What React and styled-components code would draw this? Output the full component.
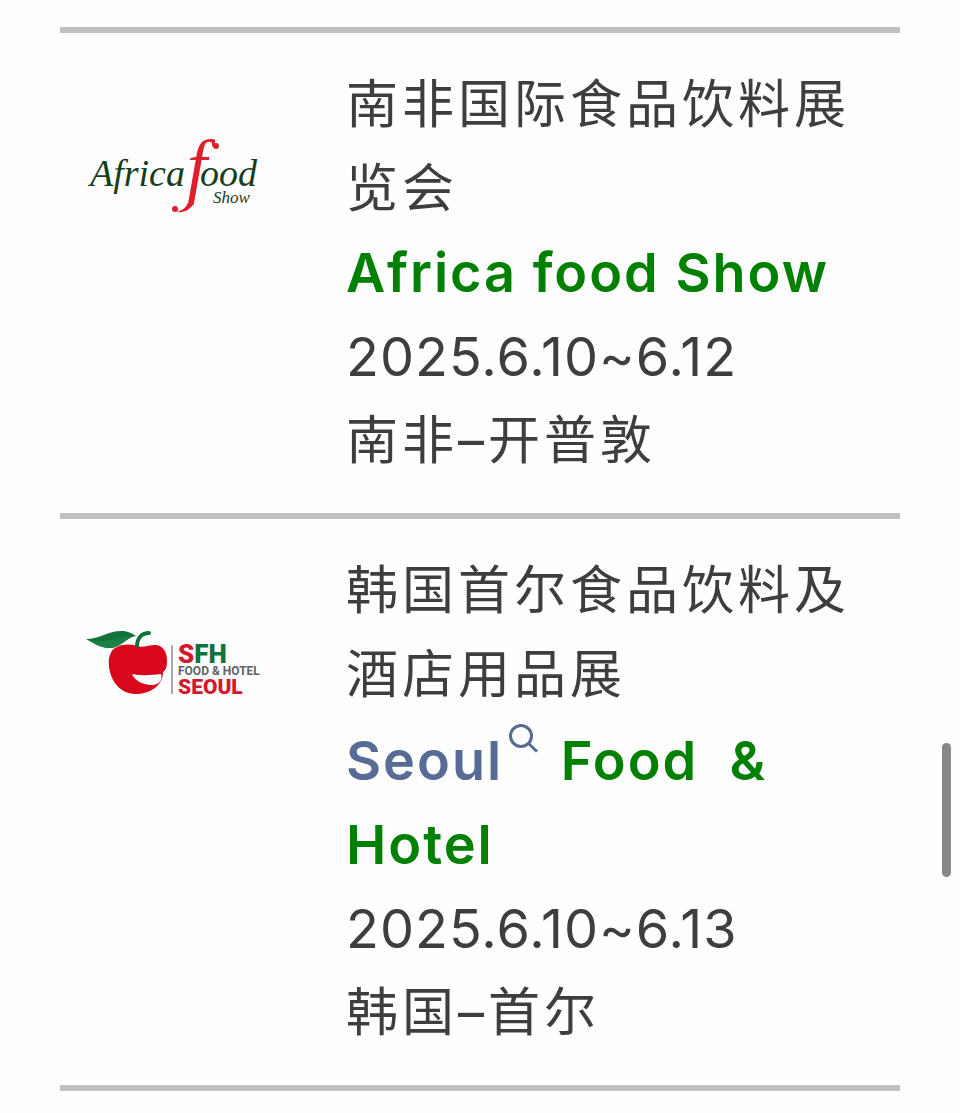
import React from "react";
import styled, { createGlobalStyle } from "styled-components";

const GlobalStyle = createGlobalStyle`
  * { box-sizing: border-box; }
  body {
    margin: 0;
    background: #fefefe;
    color: #3e3e3e;
    font-family: Inter, "Noto Sans CJK SC", sans-serif;
  }
`;

const Page = styled.main`
  padding: 27px 60px 22px;
`;

const ShowTable = styled.table`
  width: 100%;
  border-collapse: separate;
  border-spacing: 0;
  table-layout: fixed;
  border-top: 6px solid #c0c0c0;
`;

const LogoCell = styled.td`
  width: 226px;
  padding: 60px 0 0;
  vertical-align: top;
  text-align: center;
  border-bottom: 6px solid #c0c0c0;
`;

const DetailCell = styled.td`
  padding: 30px 0 30px 60px;
  vertical-align: top;
  border-bottom: 6px solid #c0c0c0;
`;

const Line = styled.p`
  margin: 0;
  font-size: 52px;
  line-height: 84px;
  letter-spacing: 4px;
  padding-right: 20px;
`;

const DateLine = styled(Line)`
  font-size: 54px;
  letter-spacing: 1px;
`;

const EnglishName = styled.strong`
  display: block;
  font-size: 54px;
  font-weight: 600;
  line-height: 84px;
  letter-spacing: 2px;
  color: #008000;
`;

const SearchLink = styled.a`
  color: #576b95;
  text-decoration: none;
`;

const SearchGlyph = styled.svg`
  width: 30px;
  height: 30px;
  margin: 7px 6px 0;
  vertical-align: 26px;
`;

const Logo = styled.svg`
  display: block;
  width: 180px;
  height: 168px;
  margin: 0 auto;
  overflow: visible;
`;

const ScrollThumb = styled.div`
  position: fixed;
  top: 743px;
  right: 9px;
  width: 9px;
  height: 134px;
  border-radius: 5px;
  background: #888888;
`;

function AfricaFoodLogo() {
  return (
    <Logo viewBox="83 93 180 168" role="img" aria-label="Africa food Show">
      <g fontFamily="'Liberation Serif', serif" fontStyle="italic" fill="#173d20">
        <text x="90" y="186" fontSize="38">Africa</text>
        <text x="187" y="190" fontSize="72" fill="#e01f2b">f</text>
        <text x="200" y="186" fontSize="38">ood</text>
        <text x="213" y="203" fontSize="17">Show</text>
      </g>
      {/* flourishes at both ends of the red letter */}
      <circle cx="216" cy="146" r="3" fill="#e01f2b" />
      <path d="M188 203 L194 203 C190 210 184 213 177 212 C179 211 185 210 188 203 Z" fill="#e01f2b" />
      <circle cx="175" cy="209" r="3" fill="#e01f2b" />
    </Logo>
  );
}

function SeoulFoodLogo() {
  return (
    <Logo viewBox="83 579 180 168" role="img" aria-label="SFH Food & Hotel Seoul">
      <path
        d="M137 646 C130 644 123 644 117 647 C110 650 108 658 109 666 C110 680 120 694 135 694 C150 694 163 686 163 672 C166 670 167 667 167 661 C167 652 163 645 155 645 C149 645 143 648 137 646 Z"
        fill="#d9071b"
      />
      <path d="M132 674 C142 676 152 675 161 674 C163 680 159 685 152 685 C143 685 135 681 132 674 Z" fill="#fefefe" />
      <path d="M86 639 C101 639 108 630 124 631 C130 632 133 634 136 636 C127 637 122 646 112 648 C101 649 92 642 86 639 Z" fill="#13713a" />
      <path d="M88 640 C104 644 114 637 134 636 C127 638 122 646 112 648 C101 649 92 642 88 640 Z" fill="#178042" />
      <path d="M137 646 C137 638 142 633 149 633" fill="none" stroke="#13713a" strokeWidth="4" strokeLinecap="round" />
      <path d="M172 645 V694" stroke="#55555a" strokeWidth="1" />
      <g fontFamily="Roboto, sans-serif" fontWeight="900">
        <text x="178" y="663" fontSize="26" fill="#d3172d">
          S<tspan fill="#13713a">FH</tspan>
        </text>
        <text x="178" y="675" fontSize="12" fontWeight="700" fill="#626265">FOOD &amp; HOTEL</text>
        <text x="178" y="694" fontSize="21" fill="#d3172d">SEOUL</text>
      </g>
    </Logo>
  );
}

function SearchIcon() {
  return (
    <SearchGlyph viewBox="0 0 30 30" fill="none" stroke="#576b95" strokeWidth="3" aria-hidden="true">
      <circle cx="12" cy="12" r="10.5" />
      <path d="M19.5 19.5 L28 27.5" />
    </SearchGlyph>
  );
}

export default function App() {
  return (
    <>
      <GlobalStyle />
      <Page>
        <ShowTable>
          <tbody>
            <tr>
              <LogoCell><AfricaFoodLogo /></LogoCell>
              <DetailCell>
                <Line>南非国际食品饮料展览会</Line>
                <EnglishName>Africa food Show</EnglishName>
                <DateLine>2025.6.10~6.12</DateLine>
                <Line>南非–开普敦</Line>
              </DetailCell>
            </tr>
            <tr>
              <LogoCell><SeoulFoodLogo /></LogoCell>
              <DetailCell>
                <Line>韩国首尔食品饮料及酒店用品展</Line>
                <EnglishName>
                  <SearchLink href="#seoul">Seoul<SearchIcon /></SearchLink>
                  {" Food \u00a0& Hotel"}
                </EnglishName>
                <DateLine>2025.6.10~6.13</DateLine>
                <Line>韩国–首尔</Line>
              </DetailCell>
            </tr>
          </tbody>
        </ShowTable>
      </Page>
      <ScrollThumb />
    </>
  );
}
